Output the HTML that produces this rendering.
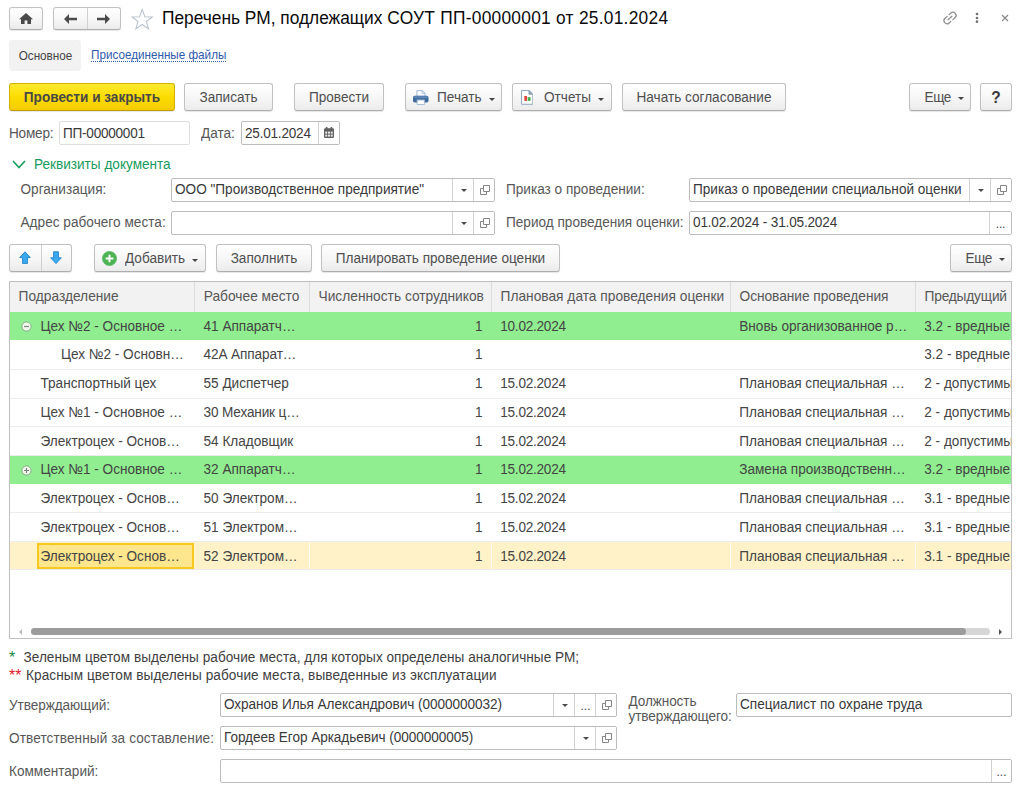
<!DOCTYPE html>
<html lang="ru">
<head>
<meta charset="utf-8">
<title>Перечень РМ, подлежащих СОУТ</title>
<style>
*{box-sizing:border-box;margin:0;padding:0}
html,body{width:1024px;height:790px;overflow:hidden;background:#fff}
body{font-family:"Liberation Sans",Arial,sans-serif;font-size:13px;color:#333;position:relative}
.abs{position:absolute;white-space:nowrap}
.btn{position:absolute;height:28px;border:1px solid #c1c1c1;border-bottom-color:#adadad;border-radius:3px;background:linear-gradient(#ffffff,#f6f6f6 55%,#ebebeb);box-shadow:0 1px 1px rgba(0,0,0,.10);font-size:13.6px;color:#4f4f4f;padding-top:1px;line-height:25px;text-align:center;white-space:nowrap}
.btn.y{background:linear-gradient(#ffea30,#fcdc00 50%,#f3cc00);border-color:#d4b000;border-bottom-color:#c09c00;font-weight:bold;color:#484848}
.caret{display:inline-block;width:0;height:0;border-left:3px solid transparent;border-right:3px solid transparent;border-top:3px solid #444;vertical-align:middle;margin-left:7px;position:relative;top:1px}
.lbl{position:absolute;white-space:nowrap;font-size:13.6px;color:#575757;line-height:16px}
.inp{position:absolute;height:24px;border:1px solid #bcbcbc;border-radius:2px;background:#fff;font-size:13.6px;color:#393939;line-height:22px;padding-top:0;padding-left:3px;white-space:nowrap;overflow:hidden}
.inp .sb{position:absolute;top:0;bottom:0;width:22px;border-left:1px solid #d2d2d2;background:#fff}

.dd{position:absolute;left:7.5px;top:10px;width:0;height:0;border-left:3px solid transparent;border-right:3px solid transparent;border-top:3.5px solid #4a4a4a}
.op{position:absolute;left:6px;top:6px}
.dots{position:absolute;left:0;right:0;top:1px;text-align:center;font-size:12px;color:#444;line-height:22px}

.tbl{position:absolute;left:9px;top:281px;width:1003px;height:358px;border:1px solid #c0c0c0;background:#fff;overflow:hidden}
.th{position:absolute;top:0;height:30px;background:#f2f2f2;font-size:13.75px;color:#575757;line-height:29px;padding-left:8.5px;white-space:nowrap;overflow:hidden}
.th i{position:absolute;left:0;top:0;bottom:0;width:1px;background:#dcdcdc}
.tr{position:absolute;left:0;right:0;border-bottom:1px solid #ececec}
.tr.g{background:#90ee90;border-bottom-color:#90ee90}
.tr.s{background:#fff2c8;border-bottom-color:#ececec}
.td{position:absolute;font-size:13.6px;color:#444;white-space:nowrap;line-height:16px}
.tg{position:absolute;left:10.5px;top:8.5px}
.vs{position:absolute;top:0;bottom:0;width:1px;background:#fffaf0}
.selc{position:absolute;top:1px;bottom:0;background:#fde68e;border:2px solid #f8c81e}
.hs{position:absolute;left:0;right:0;bottom:3px;height:8px}

.hs .l{position:absolute;left:9px;top:1.5px;width:0;height:0;border-top:3px solid transparent;border-bottom:3px solid transparent;border-right:3.5px solid #bcbcbc}
.hs .r{position:absolute;left:989px;top:2px;width:0;height:0;border-top:3px solid transparent;border-bottom:3px solid transparent;border-left:3.8px solid #505050}
.hs b{position:absolute;left:21px;top:1px;width:935px;height:7px;border-radius:4px;background:#9c9c9c;z-index:2}
.hs u{position:absolute;left:21px;top:1px;width:959px;height:7px;border-radius:4px;background:#d6d6d6}
.t{display:inline-block;line-height:1.17em;transform:scaleY(1.07);transform-origin:0 0.9315em}
.lbl,.td,.nt{transform:scaleY(1.07);transform-origin:0 12.7px}
</style>
</head>
<body>

<!-- header nav -->
<div class="btn" style="left:9px;top:7px;width:34px;height:23px">
<svg width="14" height="12" viewBox="0 0 14 12" style="position:absolute;left:9px;top:5px"><path d="M7 0 L0 6.3 L2 6.3 L2 11 L5.6 11 L5.6 7.4 L8.4 7.4 L8.4 11 L12 11 L12 6.3 L14 6.3 Z" fill="#4a4a4a"/></svg>
</div>
<div class="btn" style="left:53px;top:7px;width:68px;height:23px">
<div style="position:absolute;left:33px;top:0;bottom:0;width:1px;background:#d0d0d0"></div>
<svg width="14" height="10" viewBox="0 0 14 10" style="position:absolute;left:10px;top:6px"><path d="M5 0 L0 5 L5 10 L5 6.2 L13 6.2 L13 3.8 L5 3.8 Z" fill="#4a4a4a"/></svg>
<svg width="14" height="10" viewBox="0 0 14 10" style="position:absolute;left:43px;top:6px"><path d="M8 0 L13 5 L8 10 L8 6.2 L0 6.2 L0 3.8 L8 3.8 Z" fill="#4a4a4a"/></svg>
</div>
<svg class="abs" width="24.4" height="22.4" viewBox="0 0 24 22" style="left:130px;top:8px"><path d="M12 1.5 L14.6 8.6 L22 8.8 L16.1 13.3 L18.3 20.5 L12 16.2 L5.7 20.5 L7.9 13.3 L2 8.8 L9.4 8.6 Z" fill="none" stroke="#b7c1c9" stroke-width="1"/></svg>
<div class="abs" style="left:162px;top:6px;font-size:17.33px;color:#0a0a0a;line-height:24px"><span class="t">Перечень РМ, подлежащих <span style="letter-spacing:0.27px">СОУТ ПП-00000001 от 25.01.2024</span></span></div>

<!-- tabs -->
<div class="abs" style="left:9px;top:40px;width:72px;padding-left:1px;height:31px;background:#f2f2f2;border-radius:3px;font-size:11.7px;color:#444;line-height:31px;text-align:center"><span class="t">Основное</span></div>
<div class="abs" style="left:91px;top:48px;font-size:11.7px;color:#2e5aac;line-height:13px;border-bottom:1px dotted #2e5aac"><span class="t" style="line-height:12px;transform-origin:0 10px">Присоединенные файлы</span></div>

<!-- toolbar -->
<div class="btn y" style="left:9px;top:83px;width:166px"><span class="t">Провести и закрыть</span></div>
<div class="btn" style="left:184px;top:83px;width:89px"><span class="t">Записать</span></div>
<div class="btn" style="left:294px;top:83px;width:90px"><span class="t">Провести</span></div>
<div class="btn" style="left:405px;top:83px;width:97px;text-align:left;padding-left:31px"><span class="t">Печать</span><span class="caret"></span></div>
<div class="btn" style="left:512px;top:83px;width:100px;text-align:left;padding-left:31px"><span class="t">Отчеты</span><span class="caret"></span></div>
<div class="btn" style="left:622px;top:83px;width:164px"><span class="t">Начать согласование</span></div>
<div class="btn" style="left:909px;top:83px;width:62px;text-align:left;padding-left:14.5px;letter-spacing:-0.4px"><span class="t">Еще</span><span class="caret" style="margin-left:7.5px;top:0"></span></div>
<div class="btn" style="left:980px;top:83px;width:32px;font-size:15.5px;font-weight:bold;color:#3a3a3a;padding-top:1px"><span class="t">?</span></div>

<!-- number/date row -->
<div class="lbl" style="left:9px;top:126px;letter-spacing:-0.2px">Номер:</div>
<div class="inp" style="left:59px;top:121px;width:131px;border-color:#dedede;padding-top:1px;letter-spacing:-0.25px"><span class="t">ПП-00000001</span></div>
<div class="lbl" style="left:201px;top:126px">Дата:</div>
<div class="inp" style="left:241px;top:121px;width:99px;border-color:#bdbdbd;padding-top:1px;letter-spacing:-0.23px"><span class="t">25.01.2024</span><div class="sb" style="right:0;width:21px"><svg width="10" height="11" viewBox="0 0 10 11" style="position:absolute;left:4.5px;top:5px"><rect x="0" y="1.2" width="10" height="9.8" rx="1.2" fill="#606060"/><rect x="1.8" y="0" width="1.7" height="2.6" rx="0.5" fill="#606060"/><rect x="6.5" y="0" width="1.7" height="2.6" rx="0.5" fill="#606060"/><g fill="#e8e8e8"><rect x="1.2" y="4.6" width="2" height="2"/><rect x="4" y="4.6" width="2" height="2"/><rect x="6.8" y="4.6" width="2" height="2"/><rect x="1.2" y="7.6" width="2" height="2"/><rect x="4" y="7.6" width="2" height="2"/><rect x="6.8" y="7.6" width="2" height="2"/></g></svg></div></div>

<!-- group header -->
<svg class="abs" width="14" height="9" viewBox="0 0 14 9" style="left:12px;top:160px"><path d="M1 1 L7 7.5 L13 1" fill="none" stroke="#12a05c" stroke-width="1.6"/></svg>
<div class="lbl" style="left:34px;top:157px;color:#169b5c">Реквизиты документа</div>

<!-- org rows -->
<div class="lbl" style="left:20.5px;top:182.3px">Организация:</div>
<div class="inp" style="left:171px;top:178px;width:324px"><span class="t">ООО "Производственное предприятие"</span><div class="sb" style="right:20px;width:22px"><span class="dd"></span></div><div class="sb" style="right:0;width:21px"><svg class="op" width="10" height="10" viewBox="0 0 10 10"><path d="M3.5 0.5 H9.5 V6.5 H3.5 Z M0.5 3.5 H3.5 M0.5 3.5 V9.5 H6.5 V6.5" fill="none" stroke="#858585" stroke-width="1"/></svg></div></div>
<div class="lbl" style="left:20.5px;top:215.3px;letter-spacing:0.03px">Адрес рабочего места:</div>
<div class="inp" style="left:171px;top:211px;width:324px"><div class="sb" style="right:20px;width:22px"><span class="dd"></span></div><div class="sb" style="right:0;width:21px"><svg class="op" width="10" height="10" viewBox="0 0 10 10"><path d="M3.5 0.5 H9.5 V6.5 H3.5 Z M0.5 3.5 H3.5 M0.5 3.5 V9.5 H6.5 V6.5" fill="none" stroke="#858585" stroke-width="1"/></svg></div></div>

<div class="lbl" style="left:506px;top:182.3px">Приказ о проведении:</div>
<div class="inp" style="left:689px;top:178px;width:323px"><span class="t">Приказ о проведении специальной оценки</span><div class="sb" style="right:20px;width:22px"><span class="dd"></span></div><div class="sb" style="right:0;width:21px"><svg class="op" width="10" height="10" viewBox="0 0 10 10"><path d="M3.5 0.5 H9.5 V6.5 H3.5 Z M0.5 3.5 H3.5 M0.5 3.5 V9.5 H6.5 V6.5" fill="none" stroke="#858585" stroke-width="1"/></svg></div></div>
<div class="lbl" style="left:506px;top:215.3px">Период проведения оценки:</div>
<div class="inp" style="left:689px;top:211px;width:323px;letter-spacing:-0.18px"><span class="t">01.02.2024 - 31.05.2024</span><div class="sb" style="right:0;width:22px"><span class="dots">...</span></div></div>

<!-- table toolbar -->
<div class="btn" style="left:9px;top:244px;width:63px">
<div style="position:absolute;left:31px;top:0;bottom:0;width:1px;background:#d0d0d0"></div>
<svg width="12" height="13" viewBox="0 0 12 13" style="position:absolute;left:9px;top:6px"><path d="M6 0.8 L11.3 6.6 L8.4 6.6 L8.4 12.6 L3.6 12.6 L3.6 6.6 L0.7 6.6 Z" fill="#3ba9ee" stroke="#2a8ad2" stroke-width="1" stroke-linejoin="round"/></svg>
<svg width="12" height="13" viewBox="0 0 12 13" style="position:absolute;left:40px;top:6px"><path d="M6 12.6 L11.3 6.8 L8.4 6.8 L8.4 0.8 L3.6 0.8 L3.6 6.8 L0.7 6.8 Z" fill="#3ba9ee" stroke="#2a8ad2" stroke-width="1" stroke-linejoin="round"/></svg>
</div>
<div class="btn" style="left:94px;top:244px;width:112px;text-align:left;padding-left:30px">
<svg width="15" height="15" viewBox="0 0 14 14" style="position:absolute;left:7px;top:6px"><circle cx="7" cy="7" r="6.6" fill="#4cb254" stroke="#5fbe66" stroke-width="0.8"/><path d="M7 3.4 V10.6 M3.4 7 H10.6" stroke="#fff" stroke-width="1.8"/></svg><span class="t">Добавить</span><span class="caret"></span></div>
<div class="btn" style="left:216px;top:244px;width:96px"><span class="t">Заполнить</span></div>
<div class="btn" style="left:321px;top:244px;width:239px"><span class="t">Планировать проведение оценки</span></div>
<div class="btn" style="left:950px;top:244px;width:62px;text-align:left;padding-left:14.5px;letter-spacing:-0.4px"><span class="t">Еще</span><span class="caret" style="margin-left:7.5px;top:0"></span></div>

<!-- table -->
<div class="tbl">
<div class="th" style="left:0;width:184.25px"><span class="t">Подразделение</span></div>
<div class="th" style="left:184.25px;width:114.75px;padding-left:9.5px"><i></i><span class="t">Рабочее место</span></div>
<div class="th" style="left:299px;width:182px;padding-left:9.5px"><i></i><span class="t">Численность сотрудников</span></div>
<div class="th" style="left:481px;width:239px;padding-left:9.5px"><i></i><span class="t">Плановая дата проведения оценки</span></div>
<div class="th" style="left:720px;width:185px;padding-left:9.5px"><i></i><span class="t"><span style="letter-spacing:-0.05px">Основание проведения</span></span></div>
<div class="th" style="left:905px;width:97px;padding-left:9.5px"><i></i><span class="t"><span style="letter-spacing:-0.2px">Предыдущий</span></span></div>
<div class="tr g" style="top:30px;height:28px">
<svg class="tg" width="11" height="11" viewBox="0 0 11 11"><circle cx="5.5" cy="5.5" r="4.6" fill="#eef9ec" stroke="#8aa88a" stroke-width="1"/><path d="M3 5.5 H8" stroke="#808080" stroke-width="1.2"/></svg>
<div class="td" style="top:7.0px;left:30.5px">Цех №2 - Основное …</div>
<div class="td" style="top:7.0px;left:193.5px">41 Аппаратч…</div>
<div class="td" style="top:7.0px;left:299px;width:173.5px;text-align:right">1</div>
<div class="td" style="top:7.0px;left:490.25px;letter-spacing:-0.25px">10.02.2024</div>
<div class="td" style="top:7.0px;left:729.25px">Вновь организованное р…</div>
<div class="td" style="top:7.0px;left:914.25px">3.2 - вредные</div>
</div>
<div class="tr " style="top:58px;height:30px">
<div class="td" style="top:7.3px;left:51px">Цех №2 - Основн…</div>
<div class="td" style="top:7.3px;left:193.5px"><span style="letter-spacing:-0.1px">42А Аппарат…</span></div>
<div class="td" style="top:7.3px;left:299px;width:173.5px;text-align:right">1</div>
<div class="td" style="top:7.3px;left:914.25px">3.2 - вредные</div>
</div>
<div class="tr " style="top:88px;height:29px">
<div class="td" style="top:6.0px;left:30.5px">Транспортный цех</div>
<div class="td" style="top:6.0px;left:193.5px">55 Диспетчер</div>
<div class="td" style="top:6.0px;left:299px;width:173.5px;text-align:right">1</div>
<div class="td" style="top:6.0px;left:490.25px;letter-spacing:-0.25px">15.02.2024</div>
<div class="td" style="top:6.0px;left:729.25px">Плановая специальная …</div>
<div class="td" style="top:6.0px;left:914.25px">2 - допустимы</div>
</div>
<div class="tr " style="top:117px;height:28px">
<div class="td" style="top:5.9px;left:30.5px">Цех №1 - Основное …</div>
<div class="td" style="top:5.9px;left:193.5px"><span style="letter-spacing:-0.15px">30 Механик ц…</span></div>
<div class="td" style="top:5.9px;left:299px;width:173.5px;text-align:right">1</div>
<div class="td" style="top:5.9px;left:490.25px;letter-spacing:-0.25px">15.02.2024</div>
<div class="td" style="top:5.9px;left:729.25px">Плановая специальная …</div>
<div class="td" style="top:5.9px;left:914.25px">2 - допустимы</div>
</div>
<div class="tr " style="top:145px;height:29px">
<div class="td" style="top:6.6px;left:30.5px">Электроцех - Основ…</div>
<div class="td" style="top:6.6px;left:193.5px">54 Кладовщик</div>
<div class="td" style="top:6.6px;left:299px;width:173.5px;text-align:right">1</div>
<div class="td" style="top:6.6px;left:490.25px;letter-spacing:-0.25px">15.02.2024</div>
<div class="td" style="top:6.6px;left:729.25px">Плановая специальная …</div>
<div class="td" style="top:6.6px;left:914.25px">2 - допустимы</div>
</div>
<div class="tr g" style="top:174px;height:28px">
<svg class="tg" width="11" height="11" viewBox="0 0 11 11"><circle cx="5.5" cy="5.5" r="4.6" fill="#eef9ec" stroke="#8aa88a" stroke-width="1"/><path d="M3 5.5 H8 M5.5 3 V8" stroke="#808080" stroke-width="1.2"/></svg>
<div class="td" style="top:6.3px;left:30.5px">Цех №1 - Основное …</div>
<div class="td" style="top:6.3px;left:193.5px">32 Аппаратч…</div>
<div class="td" style="top:6.3px;left:299px;width:173.5px;text-align:right">1</div>
<div class="td" style="top:6.3px;left:490.25px;letter-spacing:-0.25px">15.02.2024</div>
<div class="td" style="top:6.3px;left:729.25px">Замена производственн…</div>
<div class="td" style="top:6.3px;left:914.25px">3.2 - вредные</div>
</div>
<div class="tr " style="top:202px;height:29px">
<div class="td" style="top:7.0px;left:30.5px">Электроцех - Основ…</div>
<div class="td" style="top:7.0px;left:193.5px">50 Электром…</div>
<div class="td" style="top:7.0px;left:299px;width:173.5px;text-align:right">1</div>
<div class="td" style="top:7.0px;left:490.25px;letter-spacing:-0.25px">15.02.2024</div>
<div class="td" style="top:7.0px;left:729.25px">Плановая специальная …</div>
<div class="td" style="top:7.0px;left:914.25px">3.1 - вредные</div>
</div>
<div class="tr " style="top:231px;height:29px">
<div class="td" style="top:6.7px;left:30.5px">Электроцех - Основ…</div>
<div class="td" style="top:6.7px;left:193.5px">51 Электром…</div>
<div class="td" style="top:6.7px;left:299px;width:173.5px;text-align:right">1</div>
<div class="td" style="top:6.7px;left:490.25px;letter-spacing:-0.25px">15.02.2024</div>
<div class="td" style="top:6.7px;left:729.25px">Плановая специальная …</div>
<div class="td" style="top:6.7px;left:914.25px">3.1 - вредные</div>
</div>
<div class="tr s" style="top:260px;height:28px">
<div class="selc" style="left:27px;width:157px"></div>
<div class="vs" style="left:299px"></div>
<div class="vs" style="left:481px"></div>
<div class="vs" style="left:720px"></div>
<div class="vs" style="left:905px"></div>
<div class="td" style="top:6.6px;left:30.5px">Электроцех - Основ…</div>
<div class="td" style="top:6.6px;left:193.5px">52 Электром…</div>
<div class="td" style="top:6.6px;left:299px;width:173.5px;text-align:right">1</div>
<div class="td" style="top:6.6px;left:490.25px;letter-spacing:-0.25px">15.02.2024</div>
<div class="td" style="top:6.6px;left:729.25px">Плановая специальная …</div>
<div class="td" style="top:6.6px;left:914.25px">3.1 - вредные</div>
</div>
<div class="hs"><i class="l"></i><b></b><u></u><i class="r"></i></div>
</div>
<!-- top right icons -->
<svg class="abs" width="18" height="18" viewBox="-9 -9 18 18" style="left:940.6px;top:8.8px"><g transform="rotate(-42)" fill="none" stroke="#8e8e8e" stroke-width="1.25" stroke-linecap="round"><path d="M-1 -3.1 H-3.9 A3.1 3.1 0 0 0 -3.9 3.1 H-1.6"/><path d="M1 3.1 H3.9 A3.1 3.1 0 0 0 3.9 -3.1 H1.6"/><path d="M-2.6 0 H2.6"/></g></svg>
<svg class="abs" width="4" height="12" viewBox="0 0 4 12" style="left:975.2px;top:12px"><circle cx="2" cy="2" r="1.35" fill="#707070"/><circle cx="2" cy="6" r="1.35" fill="#707070"/><circle cx="2" cy="9.7" r="1.35" fill="#707070"/></svg>
<svg class="abs" width="8" height="8" viewBox="0 0 8 8" style="left:1001px;top:14.2px"><path d="M1 1 L7 7 M7 1 L1 7" stroke="#8a8a8a" stroke-width="1.3" fill="none"/></svg>

<!-- print / report icons -->
<svg class="abs" width="15.5" height="15.5" viewBox="0 0 16 16" style="left:413px;top:89.5px"><path d="M4 6.5 V0.6 H9.6 L12.4 3.4 V6.5 Z" fill="#fff" stroke="#9db7d6" stroke-width="1"/><path d="M9.4 0.8 V3.6 H12.2" fill="none" stroke="#9db7d6" stroke-width="0.9"/><rect x="0" y="6" width="16" height="7" rx="1.8" fill="#3e6a9c"/><rect x="0.6" y="6.4" width="14.8" height="2" rx="1" fill="#5c86b6"/><rect x="4.3" y="10.3" width="7.4" height="4.6" fill="#fff" stroke="#9db7d6" stroke-width="0.9"/></svg>
<svg class="abs" width="12.6" height="15" viewBox="0 0 13 16" preserveAspectRatio="none" style="left:520.6px;top:89.7px"><path d="M0.6 0.6 H8.4 L12.2 4.4 V15.2 H0.6 Z" fill="#fff" stroke="#8aa0b8" stroke-width="1"/><path d="M8.2 0.8 V4.6 H12 Z" fill="#8da0b4" stroke="#8aa0b8" stroke-width="0.9"/><rect x="3.4" y="6.4" width="2.8" height="5.2" fill="#e2473b"/><rect x="6.9" y="7.6" width="3" height="4" fill="#45b04e"/></svg>

<!-- notes -->
<div class="abs" style="left:9px;top:650px;font-size:13.6px;line-height:16px;color:#404040"><span style="color:#1a8a3a;font-size:16px;position:absolute;left:0;top:0px">*</span><span class="nt" style="position:absolute;left:14.5px;letter-spacing:0.03px">Зеленым цветом выделены рабочие места, для которых определены аналогичные РМ;</span></div>
<div class="abs" style="left:9px;top:668px;font-size:13.6px;line-height:16px;color:#404040"><span style="color:#e0202a;font-size:16px;position:absolute;left:0;top:0px">**</span><span class="nt" style="position:absolute;left:17px;letter-spacing:0.09px">Красным цветом выделены рабочие места, выведенные из эксплуатации</span></div>

<!-- footer fields -->
<div class="lbl" style="left:9px;top:697.5px;letter-spacing:-0.08px">Утверждающий:</div>
<div class="inp" style="left:220px;top:693px;width:397px;letter-spacing:-0.06px"><span class="t">Охранов Илья Александрович (0000000032)</span><div class="sb" style="right:41px;width:22px"><span class="dd"></span></div><div class="sb" style="right:20px;width:22px"><span class="dots">...</span></div><div class="sb" style="right:0;width:21px"><svg class="op" width="10" height="10" viewBox="0 0 10 10"><path d="M3.5 0.5 H9.5 V6.5 H3.5 Z M0.5 3.5 H3.5 M0.5 3.5 V9.5 H6.5 V6.5" fill="none" stroke="#858585" stroke-width="1"/></svg></div></div>
<div class="lbl" style="left:628.5px;top:693.5px;letter-spacing:-0.1px">Должность</div>
<div class="lbl" style="left:628.5px;top:709.2px;letter-spacing:-0.1px">утверждающего:</div>
<div class="inp" style="left:736px;top:693px;width:276px"><span class="t">Специалист по охране труда</span></div>
<div class="lbl" style="left:9px;top:730.5px;letter-spacing:0.1px">Ответственный за составление:</div>
<div class="inp" style="left:220px;top:726px;width:397px;letter-spacing:-0.06px"><span class="t">Гордеев Егор Аркадьевич (0000000005)</span><div class="sb" style="right:20px;width:22px"><span class="dd"></span></div><div class="sb" style="right:0;width:21px"><svg class="op" width="10" height="10" viewBox="0 0 10 10"><path d="M3.5 0.5 H9.5 V6.5 H3.5 Z M0.5 3.5 H3.5 M0.5 3.5 V9.5 H6.5 V6.5" fill="none" stroke="#858585" stroke-width="1"/></svg></div></div>
<div class="lbl" style="left:9px;top:764px">Комментарий:</div>
<div class="inp" style="left:220px;top:759px;width:792px"><div class="sb" style="right:0;width:20px"><span class="dots">...</span></div></div>

</body>
</html>
